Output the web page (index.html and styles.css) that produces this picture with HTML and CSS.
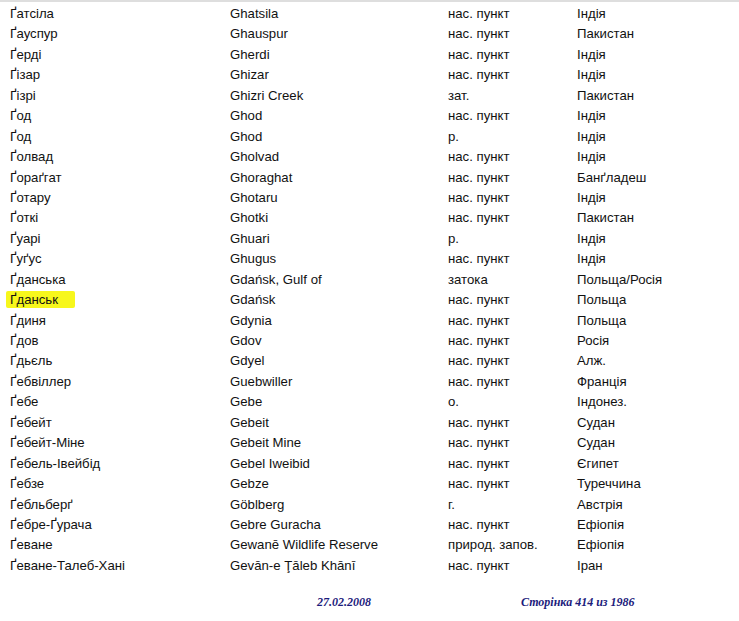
FILE: index.html
```html
<!DOCTYPE html>
<html lang="uk">
<head>
<meta charset="utf-8">
<link rel="stylesheet" href="styles.css">
</head>
<body>
<div class="topbar"></div>
<div class="list">
  <div class="row"><span>Ґатсіла</span><span>Ghatsila</span><span>нас. пункт</span><span>Індія</span></div>
  <div class="row"><span>Ґауспур</span><span>Ghauspur</span><span>нас. пункт</span><span>Пакистан</span></div>
  <div class="row"><span>Ґерді</span><span>Gherdi</span><span>нас. пункт</span><span>Індія</span></div>
  <div class="row"><span>Ґізар</span><span>Ghizar</span><span>нас. пункт</span><span>Індія</span></div>
  <div class="row"><span>Ґізрі</span><span>Ghizri Creek</span><span>зат.</span><span>Пакистан</span></div>
  <div class="row"><span>Ґод</span><span>Ghod</span><span>нас. пункт</span><span>Індія</span></div>
  <div class="row"><span>Ґод</span><span>Ghod</span><span>р.</span><span>Індія</span></div>
  <div class="row"><span>Ґолвад</span><span>Gholvad</span><span>нас. пункт</span><span>Індія</span></div>
  <div class="row"><span>Ґораґгат</span><span>Ghoraghat</span><span>нас. пункт</span><span>Банґладеш</span></div>
  <div class="row"><span>Ґотару</span><span>Ghotaru</span><span>нас. пункт</span><span>Індія</span></div>
  <div class="row"><span>Ґоткі</span><span>Ghotki</span><span>нас. пункт</span><span>Пакистан</span></div>
  <div class="row"><span>Ґуарі</span><span>Ghuari</span><span>р.</span><span>Індія</span></div>
  <div class="row"><span>Ґуґус</span><span>Ghugus</span><span>нас. пункт</span><span>Індія</span></div>
  <div class="row"><span>Ґданська</span><span>Gdańsk, Gulf of</span><span>затока</span><span>Польща/Росія</span></div>
  <div class="row"><span><mark class="hl">Ґданськ</mark></span><span>Gdańsk</span><span>нас. пункт</span><span>Польща</span></div>
  <div class="row"><span>Ґдиня</span><span>Gdynia</span><span>нас. пункт</span><span>Польща</span></div>
  <div class="row"><span>Ґдов</span><span>Gdov</span><span>нас. пункт</span><span>Росія</span></div>
  <div class="row"><span>Ґдьєль</span><span>Gdyel</span><span>нас. пункт</span><span>Алж.</span></div>
  <div class="row"><span>Ґебвіллер</span><span>Guebwiller</span><span>нас. пункт</span><span>Франція</span></div>
  <div class="row"><span>Ґебе</span><span>Gebe</span><span>о.</span><span>Індонез.</span></div>
  <div class="row"><span>Ґебейт</span><span>Gebeit</span><span>нас. пункт</span><span>Судан</span></div>
  <div class="row"><span>Ґебейт-Міне</span><span>Gebeit Mine</span><span>нас. пункт</span><span>Судан</span></div>
  <div class="row"><span>Ґебель-Івейбід</span><span>Gebel Iweibid</span><span>нас. пункт</span><span>Єгипет</span></div>
  <div class="row"><span>Ґебзе</span><span>Gebze</span><span>нас. пункт</span><span>Туреччина</span></div>
  <div class="row"><span>Ґебльберґ</span><span>Göblberg</span><span>г.</span><span>Австрія</span></div>
  <div class="row"><span>Ґебре-Ґурача</span><span>Gebre Guracha</span><span>нас. пункт</span><span>Ефіопія</span></div>
  <div class="row"><span>Ґеване</span><span>Gewanē Wildlife Reserve</span><span>природ. запов.</span><span>Ефіопія</span></div>
  <div class="row"><span>Ґеване-Талеб-Хані</span><span>Gevān-e Ţāleb Khānī</span><span>нас. пункт</span><span>Іран</span></div>
</div>
<div class="footer">
  <span class="date">27.02.2008</span>
  <span class="page">Сторінка 414 из 1986</span>
</div>
</body>
</html>
```
FILE: styles.css
```css
html, body {
  margin: 0;
  padding: 0;
  background: #ffffff;
}
body {
  width: 739px;
  height: 621px;
  overflow: hidden;
  font-family: "Liberation Sans", Arial, sans-serif;
  font-size: 13.2px;
  color: #111111;
}
.topbar {
  height: 2px;
  background: #dedede;
}
.list {
  padding: 2px 0 0 10px;
}
.row {
  display: grid;
  grid-template-columns: 220px 218px 129px 1fr;
  height: 20.45px;
  line-height: 20.45px;
  white-space: nowrap;
}
.hl {
  background: #f7f71c;
  color: inherit;
  margin-left: -4px;
  padding: 1px 17px 1px 4px;
  border-radius: 2px;
}
.footer {
  display: flex;
  padding-top: 19px;
  font-family: "Liberation Serif", "Times New Roman", serif;
  font-size: 12px;
  font-weight: bold;
  font-style: italic;
  color: #1c1c7c;
  line-height: 14px;
}
.date {
  margin-left: 317px;
}
.page {
  margin-left: 150px;
}
```
